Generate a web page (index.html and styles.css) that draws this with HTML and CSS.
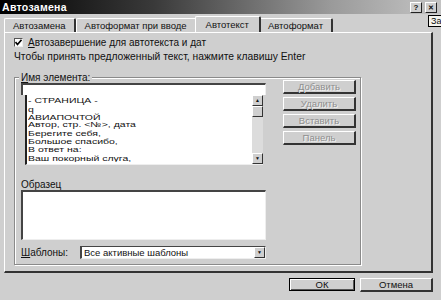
FILE: index.html
```html
<html>
  <head>
    <title>Автозамена</title>
    <link rel="stylesheet" href="styles.css">
  </head>
  <body>
    <div class='window'>
      <div class='titlebar'>
        <span class='title'>Автозамена</span>
        <div class='caption-buttons'>
          <span class='cap-btn'>?</span>
          <span class='cap-btn close'>✕</span>
        </div>
      </div>

      <div class='tip'>За</div>

      <div class='tabs'>
        <div class='tab'>Автозамена</div>
        <div class='tab'>Автоформат при вводе</div>
        <div class='tab active'>Автотекст</div>
        <div class='tab'>Автоформат</div>
      </div>

      <div class='panel'>
        <div class='check-row'>
          <span class='checkbox'>
            <svg width='7' height='7' viewBox='0 0 7 7'><path d='M0.5 3 L2.5 5.5 L6.5 0.8' stroke='#000' stroke-width='1.6' fill='none'/></svg>
          </span>
          <span><u>А</u>втозавершение для автотекста и дат</span>
        </div>
        <div class='hint'>Чтобы принять предложенный текст, нажмите клавишу Enter</div>

        <div class='group'>
          <div class='legend'><u>И</u>мя элемента:</div>
          <div class='group-body'>
            <div class='left-col'>
              <div class='textbox'></div>
              <div class='listbox'>
                <div class='items'>
                  <div>- СТРАНИЦА -</div>
                  <div>q</div>
                  <div>АВИАПОЧТОЙ</div>
                  <div>Автор, стр. &lt;№&gt;, дата</div>
                  <div>Берегите себя,</div>
                  <div>Большое спасибо,</div>
                  <div>В ответ на:</div>
                  <div>Ваш покорный слуга,</div>
                </div>
                <div class='scrollbar'>
                  <span class='sb-btn'>▲</span>
                  <span class='sb-thumb'></span>
                  <span class='sb-track'></span>
                  <span class='sb-btn'>▼</span>
                </div>
              </div>

              <div class='sample-label'>Образец</div>
              <div class='sample'></div>

              <div class='templates'>
                <span class='templates-label'><u>Ш</u>аблоны:</span>
                <div class='combo'>
                  <span class='combo-text'>Все активные шаблоны</span>
                  <span class='sb-btn'>▼</span>
                </div>
              </div>
            </div>

            <div class='right-col'>
              <div class='button disabled'>Добавить</div>
              <div class='button disabled'>Удалить</div>
              <div class='button disabled'>Вставить</div>
              <div class='button disabled'>Панель</div>
            </div>
          </div>
        </div>
      </div>

      <div class='footer'>
        <div class='button default'>ОК</div>
        <div class='button'>Отмена</div>
      </div>
    </div>
  </body>
</html>
```

FILE: styles.css
```css
html, body {
  margin: 0;
  padding: 0;
}

body {
  font-family: 'Liberation Sans', Arial, sans-serif;
  font-size: 10px;
  color: #111;
  background: #cfcfcf;
}

.window {
  position: relative;
  width: 441px;
  height: 300px;
  background: #cfcfcf;
  overflow: hidden;
}

.titlebar {
  height: 14px;
  display: flex;
  align-items: center;
  justify-content: space-between;
  padding: 0 4px 0 2px;
  background: linear-gradient(to right, #000 0%, #3a3a3a 35%, #9a9a9a 75%, #c4c4c4 100%);
}

.title {
  color: #fff;
  font-weight: bold;
  font-size: 10.5px;
  letter-spacing: 0.3px;
}

.caption-buttons {
  display: flex;
  gap: 3px;
  margin-top: 1px;
}

.cap-btn {
  width: 10px;
  height: 9px;
  background: #cfcfcf;
  border-top: 1px solid #fff;
  border-left: 1px solid #fff;
  border-right: 1px solid #222;
  border-bottom: 1px solid #222;
  font-size: 8px;
  font-weight: bold;
  line-height: 9px;
  text-align: center;
}

.close {
  font-size: 7px;
}

.tip {
  position: absolute;
  left: 428px;
  top: 15px;
  width: 16px;
  height: 10px;
  background: #f4f4ee;
  border: 1px solid #000;
  font-size: 9px;
  line-height: 10px;
  padding-left: 2px;
}

.tabs {
  display: flex;
  align-items: flex-end;
  height: 18px;
  padding-left: 4px;
}

.tab {
  height: 13px;
  line-height: 13px;
  padding: 0 8px;
  border-top: 1px solid #fff;
  border-left: 1px solid #fff;
  border-right: 2px solid #333;
  border-radius: 2px 2px 0 0;
  font-size: 9.5px;
}

.tab.active {
  height: 15px;
  line-height: 15px;
  padding: 0 10px;
  margin: 0 -2px;
  position: relative;
  z-index: 1;
  background: #cfcfcf;
  border-right: 2px solid #333;
}

.panel {
  margin: 0 8px 0 4px;
  height: 234px;
  border-top: 1px solid #fff;
  border-left: 1px solid #fff;
  border-right: 2px solid #333;
  border-bottom: 2px solid #333;
  padding: 4px 0 0 9px;
}

.check-row {
  display: flex;
  align-items: center;
  gap: 5px;
  height: 10px;
}

.checkbox {
  width: 7px;
  height: 7px;
  background: #fff;
  border-top: 1px solid #555;
  border-left: 1px solid #555;
  border-right: 1px solid #eee;
  border-bottom: 1px solid #eee;
  display: flex;
}

.hint {
  margin-top: 4px;
  height: 12px;
  font-size: 10.3px;
}

.group {
  margin-top: 14px;
  width: 347px;
  height: 188px;
  border: 1px solid #8a8a8a;
  box-shadow: inset 1px 1px 0 #fff, 1px 1px 0 #fff;
  position: relative;
  padding: 5px 0 0 6px;
  box-sizing: border-box;
}

.legend {
  position: absolute;
  top: -6px;
  left: 4px;
  padding: 0 2px;
  background: #cfcfcf;
  line-height: 11px;
}

.group-body {
  display: flex;
}

.left-col {
  width: 245px;
}

.textbox {
  height: 10px;
  background: #fff;
  border-top: 2px solid #444;
  border-left: 2px solid #444;
  border-right: 1px solid #eee;
}

.listbox {
  margin-left: 4px;
  width: 238px;
  height: 70px;
  background: #fff;
  border-left: 2px solid #222;
  border-bottom: 1px solid #eee;
  display: flex;
  box-sizing: border-box;
  overflow: hidden;
}

.items {
  flex: 1;
  align-self: flex-start;
  padding: 3px 0 0 1px;
  line-height: 11.8px;
  font-size: 10.5px;
  transform: scaleY(0.69);
  transform-origin: top left;
}

.scrollbar {
  width: 11px;
  display: flex;
  flex-direction: column;
  background: #dcdcdc;
}

.sb-btn {
  width: 9px;
  height: 9px;
  background: #cfcfcf;
  border-top: 1px solid #fff;
  border-left: 1px solid #fff;
  border-right: 1px solid #333;
  border-bottom: 1px solid #333;
  font-size: 5px;
  line-height: 9px;
  text-align: center;
}

.sb-thumb {
  width: 9px;
  height: 9px;
  background: #cfcfcf;
  border-top: 1px solid #fff;
  border-left: 1px solid #fff;
  border-right: 1px solid #333;
  border-bottom: 1px solid #333;
}

.sb-track {
  flex: 1;
}

.sample-label {
  margin-top: 14px;
  height: 11px;
  line-height: 11px;
}

.sample {
  height: 47px;
  background: #fff;
  border-top: 2px solid #444;
  border-left: 2px solid #444;
  border-right: 1px solid #eee;
  border-bottom: 1px solid #eee;
}

.templates {
  display: flex;
  align-items: center;
  margin-top: 6px;
}

.templates-label {
  width: 59px;
}

.combo {
  flex: 1;
  height: 11px;
  display: flex;
  background: #fff;
  border-top: 1px solid #444;
  border-left: 2px solid #444;
  border-right: 1px solid #eee;
  border-bottom: 1px solid #eee;
}

.combo-text {
  flex: 1;
  padding-left: 2px;
  line-height: 11px;
  font-size: 9.5px;
}

.combo .sb-btn {
  height: 9px;
}

.right-col {
  display: flex;
  flex-direction: column;
  gap: 3px;
  margin: -3px 0 0 17px;
}

.button {
  width: 70px;
  height: 11px;
  line-height: 11px;
  text-align: center;
  background: #cfcfcf;
  border-top: 1px solid #fff;
  border-left: 1px solid #fff;
  border-right: 2px solid #333;
  border-bottom: 2px solid #333;
  font-size: 9.5px;
}

.button.disabled {
  color: #8e8e8e;
  text-shadow: 1px 1px 0 #f2f2f2;
}

.footer {
  display: flex;
  justify-content: flex-end;
  gap: 5px;
  padding: 5px 8px 0 0;
}

.button.default {
  width: 64px;
  border: 1px solid #000;
  box-shadow: inset 1px 1px 0 #fff, inset -1px -1px 0 #555;
}
```
